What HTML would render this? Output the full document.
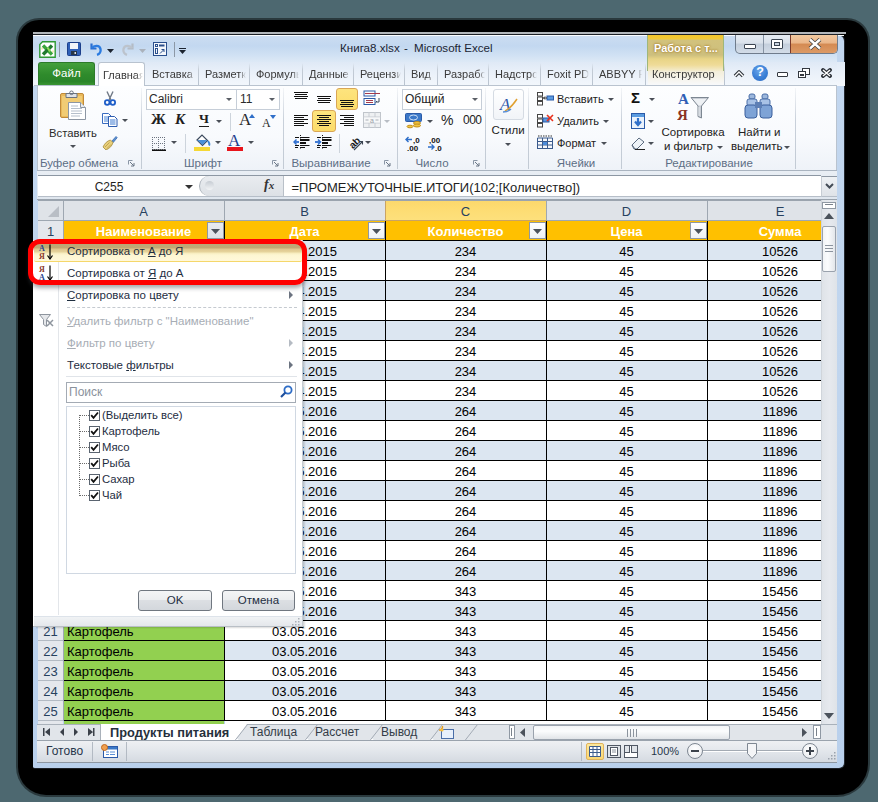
<!DOCTYPE html>
<html><head><meta charset="utf-8">
<style>
*{margin:0;padding:0;box-sizing:border-box}
html,body{width:878px;height:802px;overflow:hidden;background:#4d6870;font-family:"Liberation Sans",sans-serif;font-size:12px;color:#1e1e1e}
.a{position:absolute}
#shadow{left:18px;top:20px;width:850px;height:775px;background:#000;border-radius:21px 21px 31px 28px;box-shadow:0 0 0 2px rgba(0,0,0,.45)}
#win{left:33px;top:34px;width:812px;height:735px;background:linear-gradient(#c3d7ef,#c0d5ee 50%,#b9d0ec);border-top:1px solid #1c2026;border-right:1px solid #252a31;border-bottom:1px solid #1c2026;border-radius:0 7px 6px 2px}
.t{white-space:nowrap}
</style></head><body>
<div class="a" id="shadow"></div>
<div class="a" id="win"></div>

<!-- TITLE BAR -->
<div class="a" style="left:33px;top:32px;width:813px;height:2px;background:#b3b7bb"></div>
<div class="a" style="left:33px;top:35px;width:811px;height:1px;background:#fbfdff"></div>
<div class="a" style="left:33px;top:36px;width:804px;height:26px;background:linear-gradient(#cbdcf1,#c3d8f0 10px,#d2e2f4 20px,#dde9f6 26px)"></div>
<div class="a" style="left:34px;top:62px;width:811px;height:24px;background:linear-gradient(#e2ebf7,#f4f7fc)"></div>
<!-- excel icon -->
<svg class="a" style="left:39px;top:41px" width="17" height="17" viewBox="0 0 17 17"><path d="M3.5 0.8H16.2V16.2H0.8V3.5z" fill="#fff" stroke="#2f9a35" stroke-width="1.4"/><path d="M4 4.5l9 9" stroke="#3aa53c" stroke-width="3.4"/><path d="M13 4.5l-9 9" stroke="#1f7a2e" stroke-width="3.4"/><path d="M8.5 6.5l2.5 4" stroke="#8fdc5a" stroke-width="2"/><path d="M14 9.5v2M3 6.5v2" stroke="#f0d890" stroke-width="1.2"/></svg>
<div class="a" style="left:59px;top:42px;width:1px;height:15px;background:#8c98a6"></div>
<!-- save -->
<svg class="a" style="left:67px;top:42px" width="14" height="14" viewBox="0 0 14 14"><rect x="0.5" y="0.5" width="13" height="13" rx="1" fill="#2e5fb7" stroke="#1d3f8a"/><rect x="3" y="1" width="8" height="6" fill="#f2f5fa"/><rect x="4" y="9" width="6" height="4" fill="#263548"/><rect x="7.5" y="10" width="1.5" height="2" fill="#d8dde5"/></svg>
<!-- undo -->
<svg class="a" style="left:89px;top:42px" width="14" height="14" viewBox="0 0 14 14"><path d="M2.5 1.5v5h5" fill="none" stroke="#2b6fd2" stroke-width="2.2"/><path d="M3 6.2C5 3 10.5 3 11.5 7c.6 2.5-1 5-3.5 5.8" fill="none" stroke="#2b7be0" stroke-width="2.4"/></svg>
<svg class="a" style="left:107px;top:49px" width="7" height="4"><path d="M0 0h7L3.5 4z" fill="#1c2430"/></svg>
<!-- redo gray -->
<svg class="a" style="left:121px;top:42px" width="14" height="14" viewBox="0 0 14 14"><path d="M11.5 1.5v5h-5" fill="none" stroke="#b4bcc6" stroke-width="2.2"/><path d="M11 6.2C9 3 3.5 3 2.5 7c-.6 2.5 1 5 3.5 5.8" fill="none" stroke="#bcc3cc" stroke-width="2.4"/></svg>
<svg class="a" style="left:139px;top:49px" width="7" height="4"><path d="M0 0h7L3.5 4z" fill="#aab2bc"/></svg>
<!-- form icon -->
<svg class="a" style="left:153px;top:42px" width="14" height="14" viewBox="0 0 14 14"><rect x="0.5" y="0.5" width="13" height="13" fill="#f4f7fb" stroke="#2a4f8c"/><rect x="2.5" y="2.5" width="2" height="2" fill="none" stroke="#2a4f8c"/><rect x="6" y="2.5" width="5.5" height="2" fill="#2a4f8c"/><rect x="2.5" y="6.5" width="2" height="5" fill="none" stroke="#2a4f8c"/><path d="M7 11.5l4-4M8.5 7.5h2.5v2.5" fill="none" stroke="#2a4f8c"/></svg>
<div class="a" style="left:174px;top:42px;width:1px;height:15px;background:#8c98a6"></div>
<div class="a" style="left:179px;top:48px;width:7px;height:1px;background:#1c2430"></div>
<svg class="a" style="left:179px;top:50px" width="7" height="4"><path d="M0 0h7L3.5 4z" fill="#1c2430"/></svg>
<!-- title -->
<div class="a t" style="left:340px;top:40.5px;font-size:11.6px;color:#1b2533">Книга8.xlsx</div><div class="a t" style="left:404px;top:40.5px;font-size:11.6px;color:#1b2533">-</div><div class="a t" style="left:414px;top:40.5px;font-size:11.6px;color:#1b2533">Microsoft Excel</div>
<!-- window buttons -->
<div class="a" style="left:735px;top:35px;width:103px;height:19px;border:1px solid #6f7c8c;border-top:none;border-radius:0 0 5px 5px;background:linear-gradient(#e6ecf3,#d9e1ea 45%,#c4cfdc 50%,#d2dce8);overflow:hidden"></div>
<div class="a" style="left:763px;top:35px;width:1px;height:18px;background:#8693a3"></div>
<div class="a" style="left:790px;top:35px;width:1px;height:18px;background:#7a3a2a"></div>
<div class="a" style="left:791px;top:35px;width:46px;height:18px;border-radius:0 0 4px 0;background:linear-gradient(#f2c9a0,#eab68a 45%,#d48a52 50%,#dc9a66)"></div>
<div class="a" style="left:744px;top:44px;width:12px;height:5px;background:#fff;border:1px solid #3b4552;border-radius:1px"></div>
<div class="a" style="left:771px;top:39px;width:12px;height:10px;background:#fff;border:1px solid #3b4552;border-radius:1px"></div>
<div class="a" style="left:774px;top:42px;width:6px;height:4px;background:#c9d3df;border:1px solid #3b4552"></div>
<svg class="a" style="left:808px;top:38px" width="14" height="12" viewBox="0 0 14 12"><path d="M2 1.5l10 9M12 1.5l-10 9" stroke="#3f3f3f" stroke-width="4"/><path d="M2 1.5l10 9M12 1.5l-10 9" stroke="#fff" stroke-width="2.4"/></svg>
<!-- TAB ROW -->
<div class="a" style="left:33px;top:62px;width:804px;height:24px;background:linear-gradient(#dfe9f6,#e9f0f9 40%,#f3f7fc)"></div>
<!-- context tab header -->
<div class="a" style="left:647px;top:35px;width:77px;height:36px;background:linear-gradient(#f3c52a,#f0c838 4px,#d2c27c 5px,#cdbf7e 20px,#e8d486 24px,#efdb98 30px,#f3ecd0 36px);border-left:1px solid #9fb77a;border-right:1px solid #9fb77a"></div>
<div class="a" style="left:648px;top:71px;width:76px;height:14px;background:linear-gradient(#f3eed9,#f8f9fb)"></div>
<div class="a t" style="left:654px;top:42px;font-size:11px;font-weight:bold;color:#fff;text-shadow:0 0 2px #9a7424,0 0 3px #b58f3c">Работа с т...</div>
<div class="a" style="left:38px;top:62px;width:57px;height:24px;border-radius:3px 3px 0 0;background:linear-gradient(#44a03c,#2f8b2c 50%,#2a8529 80%,#3f9a35);border:1px solid #2c7a2a;border-bottom:none"></div>
<div class="a t" style="left:38px;top:67px;width:57px;text-align:center;color:#fff;font-size:11.5px">Файл</div>
<div class="a" style="left:34px;top:85px;width:803px;height:1px;background:#b9c3cf"></div>
<div class="a" style="left:98px;top:62px;width:47px;height:24px;border:1px solid #b9c3cf;border-bottom:none;border-radius:3px 3px 0 0;background:#fff;overflow:hidden"><div class="a t" style="left:4px;top:5.5px;font-size:11px;color:#3a3a3a;width:40px;overflow:hidden;-webkit-mask-image:linear-gradient(90deg,#000 33px,transparent)">Главная</div></div>
<div class="a" style="left:146px;top:62px;width:49px;height:23px;overflow:hidden;-webkit-mask-image:linear-gradient(90deg,#000 calc(100% - 7px),transparent)"><div class="a t" style="left:6px;top:5.5px;font-size:11px;color:#3a3a3a">Вставка</div></div>
<div class="a" style="left:198px;top:63px;width:1px;height:22px;background:linear-gradient(rgba(185,195,207,0),#c4ccd6 30%,#b9c3cf)"></div>
<div class="a" style="left:199px;top:62px;width:47px;height:23px;overflow:hidden;-webkit-mask-image:linear-gradient(90deg,#000 calc(100% - 7px),transparent)"><div class="a t" style="left:6px;top:5.5px;font-size:11px;color:#3a3a3a">Разметка</div></div>
<div class="a" style="left:249px;top:63px;width:1px;height:22px;background:linear-gradient(rgba(185,195,207,0),#c4ccd6 30%,#b9c3cf)"></div>
<div class="a" style="left:250px;top:62px;width:49px;height:23px;overflow:hidden;-webkit-mask-image:linear-gradient(90deg,#000 calc(100% - 7px),transparent)"><div class="a t" style="left:6px;top:5.5px;font-size:11px;color:#3a3a3a">Формулы</div></div>
<div class="a" style="left:302px;top:63px;width:1px;height:22px;background:linear-gradient(rgba(185,195,207,0),#c4ccd6 30%,#b9c3cf)"></div>
<div class="a" style="left:303px;top:62px;width:47px;height:23px;overflow:hidden;-webkit-mask-image:linear-gradient(90deg,#000 calc(100% - 7px),transparent)"><div class="a t" style="left:6px;top:5.5px;font-size:11px;color:#3a3a3a">Данные</div></div>
<div class="a" style="left:353px;top:63px;width:1px;height:22px;background:linear-gradient(rgba(185,195,207,0),#c4ccd6 30%,#b9c3cf)"></div>
<div class="a" style="left:354px;top:62px;width:47px;height:23px;overflow:hidden;-webkit-mask-image:linear-gradient(90deg,#000 calc(100% - 7px),transparent)"><div class="a t" style="left:6px;top:5.5px;font-size:11px;color:#3a3a3a">Рецензирование</div></div>
<div class="a" style="left:404px;top:63px;width:1px;height:22px;background:linear-gradient(rgba(185,195,207,0),#c4ccd6 30%,#b9c3cf)"></div>
<div class="a" style="left:405px;top:62px;width:29px;height:23px;overflow:hidden;-webkit-mask-image:linear-gradient(90deg,#000 calc(100% - 7px),transparent)"><div class="a t" style="left:6px;top:5.5px;font-size:11px;color:#3a3a3a">Вид</div></div>
<div class="a" style="left:437px;top:63px;width:1px;height:22px;background:linear-gradient(rgba(185,195,207,0),#c4ccd6 30%,#b9c3cf)"></div>
<div class="a" style="left:438px;top:62px;width:47px;height:23px;overflow:hidden;-webkit-mask-image:linear-gradient(90deg,#000 calc(100% - 7px),transparent)"><div class="a t" style="left:6px;top:5.5px;font-size:11px;color:#3a3a3a">Разработчик</div></div>
<div class="a" style="left:488px;top:63px;width:1px;height:22px;background:linear-gradient(rgba(185,195,207,0),#c4ccd6 30%,#b9c3cf)"></div>
<div class="a" style="left:489px;top:62px;width:48px;height:23px;overflow:hidden;-webkit-mask-image:linear-gradient(90deg,#000 calc(100% - 7px),transparent)"><div class="a t" style="left:6px;top:5.5px;font-size:11px;color:#3a3a3a">Надстройки</div></div>
<div class="a" style="left:540px;top:63px;width:1px;height:22px;background:linear-gradient(rgba(185,195,207,0),#c4ccd6 30%,#b9c3cf)"></div>
<div class="a" style="left:541px;top:62px;width:48px;height:23px;overflow:hidden;-webkit-mask-image:linear-gradient(90deg,#000 calc(100% - 7px),transparent)"><div class="a t" style="left:6px;top:5.5px;font-size:11px;color:#3a3a3a">Foxit PDF</div></div>
<div class="a" style="left:592px;top:63px;width:1px;height:22px;background:linear-gradient(rgba(185,195,207,0),#c4ccd6 30%,#b9c3cf)"></div>
<div class="a" style="left:593px;top:62px;width:49px;height:23px;overflow:hidden;-webkit-mask-image:linear-gradient(90deg,#000 calc(100% - 7px),transparent)"><div class="a t" style="left:6px;top:5.5px;font-size:11px;color:#3a3a3a">ABBYY PDF</div></div>
<div class="a" style="left:645px;top:63px;width:1px;height:22px;background:linear-gradient(rgba(185,195,207,0),#c4ccd6 30%,#b9c3cf)"></div>
<div class="a" style="left:646px;top:62px;width:75px;height:23px;overflow:hidden;-webkit-mask-image:linear-gradient(90deg,#000 calc(100% - 7px),transparent)"><div class="a t" style="left:6px;top:5.5px;font-size:11px;color:#3a3a3a">Конструктор</div></div>
<div class="a" style="left:724px;top:63px;width:1px;height:22px;background:linear-gradient(rgba(185,195,207,0),#c4ccd6 30%,#b9c3cf)"></div>
<!-- right tab-row icons -->
<svg class="a" style="left:733px;top:69px" width="12" height="9" viewBox="0 0 12 9"><path d="M2 7l4-4 4 4" fill="none" stroke="#2e333a" stroke-width="3.6" stroke-linejoin="round"/><path d="M2 7l4-4 4 4" fill="none" stroke="#fff" stroke-width="1.4"/></svg>
<div class="a" style="left:752px;top:65px;width:16px;height:16px;border-radius:50%;background:radial-gradient(circle at 45% 35%,#6aa6ea,#3a7fd6 55%,#2f6cc0)"></div>
<div class="a t" style="left:752px;top:65px;width:16px;text-align:center;color:#fff;font-weight:bold;font-size:12.5px">?</div>
<div class="a" style="left:777px;top:72px;width:11px;height:5px;border:1.5px solid #33383f;background:#fff;border-radius:1px"></div>
<div class="a" style="left:802px;top:68px;width:8px;height:7px;border:1.5px solid #33383f;background:#fff"></div>
<div class="a" style="left:798px;top:71px;width:8px;height:7px;border:1.5px solid #33383f;background:#fff"></div>
<div class="a" style="left:800px;top:74px;width:4px;height:2px;background:#33383f"></div>
<svg class="a" style="left:821px;top:68px" width="11" height="10" viewBox="0 0 11 10"><path d="M2 2l7 6M9 2l-7 6" stroke="#2e333a" stroke-width="3.8" stroke-linecap="round"/><path d="M2 2l7 6M9 2l-7 6" stroke="#fff" stroke-width="1.5"/></svg>
<!-- RIBBON BODY -->
<div class="a" style="left:37px;top:86px;width:800px;height:85px;background:linear-gradient(#fdfeff,#f8fafd 60%,#eef2f8);border-left:1px solid #b9c3cf;border-right:1px solid #b9c3cf"></div>
<div class="a" style="left:37px;top:170px;width:800px;height:1px;background:#aab4c0"></div>
<div class="a" style="left:141px;top:88px;width:1px;height:81px;background:linear-gradient(#f3f5f8,#c8d0da 40%,#c2cad4)"></div>
<div class="a" style="left:283px;top:88px;width:1px;height:81px;background:linear-gradient(#f3f5f8,#c8d0da 40%,#c2cad4)"></div>
<div class="a" style="left:397px;top:88px;width:1px;height:81px;background:linear-gradient(#f3f5f8,#c8d0da 40%,#c2cad4)"></div>
<div class="a" style="left:485px;top:88px;width:1px;height:81px;background:linear-gradient(#f3f5f8,#c8d0da 40%,#c2cad4)"></div>
<div class="a" style="left:528px;top:88px;width:1px;height:81px;background:linear-gradient(#f3f5f8,#c8d0da 40%,#c2cad4)"></div>
<div class="a" style="left:621px;top:88px;width:1px;height:81px;background:linear-gradient(#f3f5f8,#c8d0da 40%,#c2cad4)"></div>
<div class="a" style="left:795px;top:88px;width:1px;height:81px;background:linear-gradient(#f3f5f8,#c8d0da 40%,#c2cad4)"></div>
<svg class="a" style="left:128px;top:160px" width="7" height="7" viewBox="0 0 7 7"><path d="M0.5 0.5h4M0.5 0.5v4" stroke="#8a96a6"/><path d="M2 2l4 4M6 3v3H3" stroke="#6a7686" fill="none"/></svg>
<svg class="a" style="left:272px;top:160px" width="7" height="7" viewBox="0 0 7 7"><path d="M0.5 0.5h4M0.5 0.5v4" stroke="#8a96a6"/><path d="M2 2l4 4M6 3v3H3" stroke="#6a7686" fill="none"/></svg>
<svg class="a" style="left:384px;top:160px" width="7" height="7" viewBox="0 0 7 7"><path d="M0.5 0.5h4M0.5 0.5v4" stroke="#8a96a6"/><path d="M2 2l4 4M6 3v3H3" stroke="#6a7686" fill="none"/></svg>
<svg class="a" style="left:473px;top:160px" width="7" height="7" viewBox="0 0 7 7"><path d="M0.5 0.5h4M0.5 0.5v4" stroke="#8a96a6"/><path d="M2 2l4 4M6 3v3H3" stroke="#6a7686" fill="none"/></svg>

<svg class="a" style="left:57px;top:90px" width="30" height="32" viewBox="0 0 30 32">
<rect x="3.5" y="3.5" width="23" height="24" rx="1.5" fill="#eab95a" stroke="#c08a3a"/>
<rect x="5" y="6" width="20" height="20" fill="#f1cc74"/>
<path d="M9 3.5h11v4H9z" fill="#dfe3e8" stroke="#6b7480"/>
<circle cx="14.5" cy="2.8" r="1.8" fill="none" stroke="#6b7480"/>
<path d="M11.5 12.5h12l5 5v12h-17z" fill="#fff" stroke="#8c96a3"/>
<path d="M23.5 12.5v5h5" fill="#e8ecf1" stroke="#8c96a3"/>
<path d="M14 16h7M14 18.5h11M14 21h11M14 23.5h11M14 26h9" stroke="#b5bfcb"/>
</svg>
<div class="a t" style="left:45px;top:126.5px;width:56px;text-align:center;font-size:11.3px;color:#2b2b2b">Вставить</div>
<svg class="a" style="left:70px;top:145px" width="6" height="3"><path d="M0 0h6L3 3z" fill="#4a4f57"/></svg>

<svg class="a" style="left:104px;top:91px" width="12" height="15" viewBox="0 0 12 15"><path d="M3 0.5l4 8.5M9 0.5L5 9" stroke="#6f7885" stroke-width="1.4"/><circle cx="3.2" cy="11.5" r="2.3" fill="none" stroke="#1f5ec8" stroke-width="1.8"/><circle cx="8.8" cy="11.5" r="2.3" fill="none" stroke="#1f5ec8" stroke-width="1.8"/></svg>
<svg class="a" style="left:102px;top:113px" width="16" height="14" viewBox="0 0 16 14"><path d="M0.5 0.5h6l2.5 2.5v7.5H0.5z" fill="#fff" stroke="#3a6cc0"/><path d="M2 4h5M2 6h5M2 8h5" stroke="#4a86d8"/><path d="M6.5 3.5h6l2.5 2.5v7.5H6.5z" fill="#fff" stroke="#2d5cb0"/><path d="M8 7h5.5M8 9h5.5M8 11h5.5" stroke="#3a78d0"/></svg>
<svg class="a" style="left:122px;top:119px" width="6" height="3"><path d="M0 0h6L3 3z" fill="#4a4f57"/></svg>

<svg class="a" style="left:102px;top:135px" width="16" height="15" viewBox="0 0 16 15"><path d="M9.5 6.5L14 1.5l1.2 1.2-4.2 5z" fill="#5b8fd0" stroke="#3a6cb0" stroke-width=".8"/><path d="M1 12c2-4 4-6 7.5-7l2.5 2.5c-1 3.5-3 5.5-7 7.5z" fill="#e8cf7a" stroke="#a58a3a" stroke-width=".8"/><path d="M3 12l4.5-4.5M5 13.5l4-4" stroke="#b89a48" stroke-width=".8"/></svg>

<div class="a" style="left:146px;top:89px;width:91px;height:21px;border:1px solid #c6ced8;background:#fff"></div>
<div class="a" style="left:236px;top:89px;width:44px;height:21px;border:1px solid #c6ced8;background:#fff"></div>
<div class="a t" style="left:149px;top:92px;font-size:12px;color:#2b2b2b">Calibri</div>
<div class="a t" style="left:240px;top:92px;font-size:12px;color:#2b2b2b">11</div>
<svg class="a" style="left:226px;top:98px" width="6" height="3"><path d="M0 0h6L3 3z" fill="#5a5f66"/></svg>
<svg class="a" style="left:269px;top:98px" width="6" height="3"><path d="M0 0h6L3 3z" fill="#5a5f66"/></svg>

<div class="a t" style="left:151px;top:111px;font-family:'Liberation Serif',serif;font-weight:bold;font-size:15px;color:#1e1e1e">Ж</div>
<div class="a t" style="left:175px;top:111px;font-family:'Liberation Serif',serif;font-weight:bold;font-style:italic;font-size:15px;color:#1e1e1e">К</div>
<div class="a t" style="left:199px;top:111px;font-family:'Liberation Serif',serif;font-weight:bold;font-size:13.5px;color:#1e1e1e">Ч</div>
<div class="a" style="left:199px;top:126px;width:10px;height:1px;background:#1e1e1e"></div>
<svg class="a" style="left:216px;top:120px" width="6" height="3"><path d="M0 0h6L3 3z" fill="#4a4f57"/></svg>
<div class="a" style="left:230px;top:113px;width:1px;height:18px;background:#cdd4dc"></div>
<div class="a t" style="left:239px;top:110px;font-family:'Liberation Serif',serif;font-size:17px;color:#2a2a2a">A</div>
<svg class="a" style="left:249px;top:114px" width="6" height="4"><path d="M0 4h6L3 0z" fill="#2f6fc9"/></svg>
<div class="a t" style="left:262px;top:116px;font-family:'Liberation Serif',serif;font-size:12px;color:#2a2a2a">A</div>
<svg class="a" style="left:270px;top:115px" width="6" height="4"><path d="M0 0h6L3 4z" fill="#2f6fc9"/></svg>
<svg class="a" style="left:152px;top:137px" width="14" height="14" viewBox="0 0 14 14"><g fill="#6b7380"><rect x="0" y="0" width="1" height="1"/><rect x="0" y="0" width="1" height="1"/><rect x="0" y="6" width="1" height="1"/><rect x="6" y="0" width="1" height="1"/><rect x="0" y="12" width="1" height="1"/><rect x="12" y="0" width="1" height="1"/><rect x="2" y="0" width="1" height="1"/><rect x="0" y="2" width="1" height="1"/><rect x="2" y="6" width="1" height="1"/><rect x="6" y="2" width="1" height="1"/><rect x="2" y="12" width="1" height="1"/><rect x="12" y="2" width="1" height="1"/><rect x="4" y="0" width="1" height="1"/><rect x="0" y="4" width="1" height="1"/><rect x="4" y="6" width="1" height="1"/><rect x="6" y="4" width="1" height="1"/><rect x="4" y="12" width="1" height="1"/><rect x="12" y="4" width="1" height="1"/><rect x="6" y="0" width="1" height="1"/><rect x="0" y="6" width="1" height="1"/><rect x="6" y="6" width="1" height="1"/><rect x="6" y="6" width="1" height="1"/><rect x="6" y="12" width="1" height="1"/><rect x="12" y="6" width="1" height="1"/><rect x="8" y="0" width="1" height="1"/><rect x="0" y="8" width="1" height="1"/><rect x="8" y="6" width="1" height="1"/><rect x="6" y="8" width="1" height="1"/><rect x="8" y="12" width="1" height="1"/><rect x="12" y="8" width="1" height="1"/><rect x="10" y="0" width="1" height="1"/><rect x="0" y="10" width="1" height="1"/><rect x="10" y="6" width="1" height="1"/><rect x="6" y="10" width="1" height="1"/><rect x="10" y="12" width="1" height="1"/><rect x="12" y="10" width="1" height="1"/><rect x="12" y="0" width="1" height="1"/><rect x="0" y="12" width="1" height="1"/><rect x="12" y="6" width="1" height="1"/><rect x="6" y="12" width="1" height="1"/><rect x="12" y="12" width="1" height="1"/><rect x="12" y="12" width="1" height="1"/></g><rect x="0" y="12.5" width="14" height="1.5" fill="#111"/></svg>
<svg class="a" style="left:171px;top:141px" width="6" height="3"><path d="M0 0h6L3 3z" fill="#4a4f57"/></svg>
<div class="a" style="left:185px;top:134px;width:1px;height:19px;background:#cdd4dc"></div>
<svg class="a" style="left:194px;top:134px" width="17" height="13" viewBox="0 0 17 13"><path d="M3 6l5-5 5.5 5.5-5 5z" fill="#fff" stroke="#3c4a5e" stroke-width="1.2"/><path d="M3 6h10.5l-5 5z" fill="#4a90d9"/><path d="M14 7c1 1.5 2 3 1 4.5" stroke="#3c86d8" stroke-width="2" fill="none"/></svg>
<div class="a" style="left:194px;top:147px;width:16px;height:4px;background:#f5d835"></div>
<svg class="a" style="left:215px;top:141px" width="6" height="3"><path d="M0 0h6L3 3z" fill="#4a4f57"/></svg>
<div class="a t" style="left:228px;top:131px;font-family:'Liberation Serif',serif;font-size:17px;color:#223d8c">A</div>
<div class="a" style="left:227px;top:147px;width:16px;height:4px;background:#e8141b"></div>
<svg class="a" style="left:248px;top:141px" width="6" height="3"><path d="M0 0h6L3 3z" fill="#4a4f57"/></svg>

<div class="a" style="left:336px;top:88px;width:22px;height:22px;border:1px solid #d9a655;border-radius:3px;background:linear-gradient(#fde47e,#fcdc6a)"></div>
<div class="a" style="left:312px;top:110px;width:24px;height:22px;border:1px solid #d9a655;border-radius:3px;background:linear-gradient(#fde47e,#fcdc6a)"></div>
<div class="a" style="left:294px;top:92px;width:14px;height:1px;background:#111"></div>
<div class="a" style="left:295px;top:94px;width:12px;height:1px;background:#111"></div>
<div class="a" style="left:294px;top:96px;width:14px;height:1px;background:#111"></div>
<div class="a" style="left:295px;top:98px;width:12px;height:1px;background:#111"></div>
<div class="a" style="left:317px;top:96px;width:14px;height:1px;background:#111"></div>
<div class="a" style="left:318px;top:98px;width:12px;height:1px;background:#111"></div>
<div class="a" style="left:317px;top:100px;width:14px;height:1px;background:#111"></div>
<div class="a" style="left:318px;top:102px;width:12px;height:1px;background:#111"></div>
<div class="a" style="left:340px;top:100px;width:14px;height:1px;background:#111"></div>
<div class="a" style="left:341px;top:102px;width:12px;height:1px;background:#111"></div>
<div class="a" style="left:340px;top:104px;width:14px;height:1px;background:#111"></div>
<div class="a" style="left:341px;top:106px;width:12px;height:1px;background:#111"></div>
<div class="a" style="left:294px;top:115px;width:14px;height:1px;background:#111"></div>
<div class="a" style="left:294px;top:117px;width:10px;height:1px;background:#111"></div>
<div class="a" style="left:294px;top:119px;width:14px;height:1px;background:#111"></div>
<div class="a" style="left:294px;top:121px;width:10px;height:1px;background:#111"></div>
<div class="a" style="left:294px;top:123px;width:14px;height:1px;background:#111"></div>
<div class="a" style="left:294px;top:125px;width:10px;height:1px;background:#111"></div>
<div class="a" style="left:317px;top:115px;width:14px;height:1px;background:#111"></div>
<div class="a" style="left:319px;top:117px;width:10px;height:1px;background:#111"></div>
<div class="a" style="left:317px;top:119px;width:14px;height:1px;background:#111"></div>
<div class="a" style="left:319px;top:121px;width:10px;height:1px;background:#111"></div>
<div class="a" style="left:317px;top:123px;width:14px;height:1px;background:#111"></div>
<div class="a" style="left:319px;top:125px;width:10px;height:1px;background:#111"></div>
<div class="a" style="left:340px;top:115px;width:14px;height:1px;background:#111"></div>
<div class="a" style="left:344px;top:117px;width:10px;height:1px;background:#111"></div>
<div class="a" style="left:340px;top:119px;width:14px;height:1px;background:#111"></div>
<div class="a" style="left:344px;top:121px;width:10px;height:1px;background:#111"></div>
<div class="a" style="left:340px;top:123px;width:14px;height:1px;background:#111"></div>
<div class="a" style="left:344px;top:125px;width:10px;height:1px;background:#111"></div>
<svg class="a" style="left:363px;top:90px" width="18" height="17" viewBox="0 0 18 17"><rect x="1" y="1" width="11" height="5" fill="#fff" stroke="#2a5aa8"/><path d="M2 3.5h15" stroke="#a33b4c"/><rect x="1" y="8.5" width="11" height="6" fill="#fff" stroke="#2a5aa8"/><path d="M3 10.5h7M3 12.5h7" stroke="#a33b4c"/><path d="M16 8v4h-3M14 11l-1.5 1.5" stroke="#3f4d60" fill="none"/></svg>
<svg class="a" style="left:363px;top:112px" width="18" height="16" viewBox="0 0 18 16"><rect x="0.5" y="0.5" width="17" height="15" fill="#eef0f2" stroke="#c0c5cb"/><path d="M0.5 5h17M0.5 11h17M6 0v5M12 0v5M6 11v5M12 11v5" stroke="#c8ccd2"/><rect x="1" y="5.5" width="16" height="5" fill="#f7f8f9"/><path d="M2.5 8h3M12.5 8h3" stroke="#a9aeb5"/><text x="9" y="10.5" font-size="7" text-anchor="middle" fill="#9aa0a8" font-family="Liberation Sans">a</text></svg>
<svg class="a" style="left:384px;top:120px" width="6" height="3"><path d="M0 0h6L3 3z" fill="#b8bdc4"/></svg>
<svg class="a" style="left:293px;top:135px" width="17" height="16" viewBox="0 0 17 16"><path d="M7.5 0v15" stroke="#111" stroke-dasharray="1 1.5"/><path d="M2 2.5h4M2 10.5h4M2 12.5h3" stroke="#111"/><path d="M7 2.5h9.5M7 10.5h9.5M7 12.5h5" stroke="#111"/><path d="M7 5h9.5" stroke="#111" stroke-width="2"/><path d="M7 8h6" stroke="#111" stroke-width="2"/><path d="M1 7h5" stroke="#2f6fd0" stroke-width="1.8"/><path d="M3.5 4.5L1 7l2.5 2.5" stroke="#2f6fd0" stroke-width="1.5" fill="none"/></svg>
<svg class="a" style="left:315px;top:135px" width="17" height="16" viewBox="0 0 17 16"><path d="M7.5 0v15" stroke="#111" stroke-dasharray="1 1.5"/><path d="M2 2.5h4M2 10.5h4M2 12.5h3" stroke="#111"/><path d="M7 2.5h9.5M7 10.5h9.5M7 12.5h5" stroke="#111"/><path d="M7 5h9.5" stroke="#111" stroke-width="2"/><path d="M7 8h6" stroke="#111" stroke-width="2"/><path d="M0 7h5" stroke="#2f6fd0" stroke-width="1.8"/><path d="M3 4.5L5.5 7 3 9.5" stroke="#2f6fd0" stroke-width="1.5" fill="none"/></svg>
<div class="a" style="left:339px;top:134px;width:1px;height:19px;background:#cdd4dc"></div>
<svg class="a" style="left:348px;top:135px" width="16" height="16" viewBox="0 0 16 16"><g transform="rotate(-45 7 8)"><text x="1" y="11" font-size="10" font-weight="bold" fill="#1a1a1a" font-family="Liberation Sans">ab</text></g><path d="M6 15L14.5 6.5M11.5 6.5h3v3" stroke="#3a4350" fill="none" stroke-width="1.1"/></svg>
<svg class="a" style="left:365px;top:141px" width="6" height="3"><path d="M0 0h6L3 3z" fill="#4a4f57"/></svg>
<div class="a" style="left:402px;top:89px;width:80px;height:21px;border:1px solid #c6ced8;background:#fff"></div>
<div class="a t" style="left:405px;top:92px;font-size:12px;color:#222">Общий</div>
<svg class="a" style="left:472px;top:98px" width="6" height="3"><path d="M0 0h6L3 3z" fill="#5a5f66"/></svg>
<svg class="a" style="left:405px;top:113px" width="18" height="16" viewBox="0 0 18 16"><rect x="0.5" y="0.5" width="16" height="8" rx="1" fill="#3b78c8" stroke="#2a5aa8"/><ellipse cx="8.5" cy="4.5" rx="4" ry="2.5" fill="none" stroke="#cfe0f6"/><ellipse cx="12" cy="10" rx="3.5" ry="1.5" fill="#f3c640" stroke="#c08f20"/><ellipse cx="12" cy="12.5" rx="3.5" ry="1.5" fill="#f3c640" stroke="#c08f20"/><ellipse cx="5" cy="13.5" rx="3" ry="1.3" fill="#f3c640" stroke="#c08f20"/></svg>
<svg class="a" style="left:427px;top:120px" width="6" height="3"><path d="M0 0h6L3 3z" fill="#4a4f57"/></svg>
<div class="a t" style="left:441px;top:112px;font-size:14px;color:#222">%</div>
<div class="a t" style="left:463px;top:113px;font-size:12px;color:#222;letter-spacing:-0.5px">000</div>
<svg class="a" style="left:405px;top:135px" width="18" height="16" viewBox="0 0 18 16"><path d="M1 4.5h6M3.5 2L1 4.5 3.5 7" stroke="#2f6fc9" fill="none" stroke-width="1.4"/><text x="8" y="8" font-size="8" font-weight="bold" fill="#111" font-family="Liberation Sans">,0</text><text x="2" y="15.5" font-size="8" font-weight="bold" fill="#111" font-family="Liberation Sans">,00</text></svg>
<svg class="a" style="left:427px;top:135px" width="18" height="16" viewBox="0 0 18 16"><text x="2" y="8" font-size="8" font-weight="bold" fill="#111" font-family="Liberation Sans">,00</text><path d="M1 12h6M4.5 9.5L7 12 4.5 14.5" stroke="#2f6fc9" fill="none" stroke-width="1.4"/><text x="8" y="15.5" font-size="8" font-weight="bold" fill="#111" font-family="Liberation Sans">,0</text></svg>
<div class="a" style="left:493px;top:89px;width:31px;height:31px;border:1px solid #d5dbe3;border-radius:3px;background:linear-gradient(#fff,#f1f4f8)"></div>
<svg class="a" style="left:499px;top:94px" width="20" height="20" viewBox="0 0 20 20"><text x="1" y="16" font-size="17" font-style="italic" fill="#2c55a8" font-family="Liberation Serif">A</text><path d="M6 17c4-2 8-6 12-12" stroke="#e0a030" stroke-width="1.5" fill="none"/><path d="M4 18c3 0 6-1 8-3" stroke="#5a8fd6" stroke-width="1.5" fill="none"/></svg>
<div class="a t" style="left:491px;top:124px;width:34px;text-align:center;font-size:11.5px;color:#222">Стили</div>
<svg class="a" style="left:505px;top:143px" width="6" height="3"><path d="M0 0h6L3 3z" fill="#4a4f57"/></svg>
<svg class="a" style="left:537px;top:92px" width="17" height="14" viewBox="0 0 17 14"><rect x="0.5" y="0.5" width="5" height="3.5" fill="#fff" stroke="#444"/><rect x="0.5" y="5" width="5" height="3.5" fill="#fff" stroke="#444"/><rect x="0.5" y="9.5" width="5" height="3.5" fill="#fff" stroke="#444"/><rect x="10" y="4" width="6.5" height="4" fill="#5a9be0" stroke="#2a5aa8"/><path d="M6.5 6h3.5M8 4.5L6.5 6 8 7.5" stroke="#222" fill="none"/></svg>
<div class="a t" style="left:557px;top:92.5px;font-size:11px;color:#222">Вставить</div>
<svg class="a" style="left:537px;top:114px" width="17" height="14" viewBox="0 0 17 14"><rect x="0.5" y="0.5" width="5" height="3.5" fill="#fff" stroke="#444"/><rect x="0.5" y="5" width="5" height="3.5" fill="#fff" stroke="#444"/><rect x="0.5" y="9.5" width="5" height="3.5" fill="#fff" stroke="#444"/><rect x="6" y="4" width="6" height="4" fill="#5a9be0" stroke="#2a5aa8"/><path d="M10 1l6 6M16 1l-6 6" stroke="#e8301c" stroke-width="1.6"/></svg>
<div class="a t" style="left:557px;top:114.5px;font-size:11px;color:#222">Удалить</div>
<svg class="a" style="left:537px;top:135px" width="17" height="15" viewBox="0 0 17 15"><path d="M0.5 3h15M0.5 6.5h15M0.5 10h15M0.5 13.5h15M0.5 3v11M5.5 3v11M10.5 3v11M15.5 3v11" stroke="#3a5a8c" fill="none"/><rect x="6" y="7" width="4" height="3" fill="#4a8ad8"/><path d="M1 1h14" stroke="#333" stroke-dasharray="1.5 1"/></svg>
<div class="a t" style="left:557px;top:136.5px;font-size:11px;color:#222">Формат</div>
<svg class="a" style="left:608px;top:98px" width="6" height="3"><path d="M0 0h6L3 3z" fill="#4a4f57"/></svg>
<svg class="a" style="left:603px;top:120px" width="6" height="3"><path d="M0 0h6L3 3z" fill="#4a4f57"/></svg>
<svg class="a" style="left:601px;top:142px" width="6" height="3"><path d="M0 0h6L3 3z" fill="#4a4f57"/></svg>
<div class="a t" style="left:631px;top:89px;font-size:15px;font-weight:bold;color:#111">Σ</div>
<svg class="a" style="left:631px;top:113px" width="14" height="16" viewBox="0 0 14 16"><rect x="0.5" y="0.5" width="13" height="15" fill="#eaf2fc" stroke="#2a5aa8"/><rect x="1" y="1" width="12" height="3" fill="#5a9be0"/><path d="M7 5v6M4 8.5L7 12l3-3.5" stroke="#2f6fc9" stroke-width="2.2" fill="none"/></svg>
<svg class="a" style="left:630px;top:137px" width="16" height="13" viewBox="0 0 16 13"><path d="M2 8l7-7 5 4-7 7H4z" fill="#eef3f8" stroke="#5b6b80"/><path d="M2 8l3 4" stroke="#5b6b80"/><path d="M5 12.5h10" stroke="#222"/></svg>
<svg class="a" style="left:649px;top:98px" width="6" height="3"><path d="M0 0h6L3 3z" fill="#4a4f57"/></svg>
<svg class="a" style="left:648px;top:120px" width="6" height="3"><path d="M0 0h6L3 3z" fill="#4a4f57"/></svg>
<svg class="a" style="left:648px;top:142px" width="6" height="3"><path d="M0 0h6L3 3z" fill="#4a4f57"/></svg>
<svg class="a" style="left:677px;top:91px" width="33" height="30" viewBox="0 0 33 30"><text x="1" y="13" font-size="15" font-weight="bold" fill="#2f5fb5" font-family="Liberation Serif">A</text><text x="0" y="29" font-size="15" font-weight="bold" fill="#8b3322" font-family="Liberation Serif">Я</text><path d="M14 6.5h17.5l-7 8.5v12l-3.5-1.5V15z" fill="#c9ced6" stroke="#7d8792"/><path d="M16 8h13.5l-5.5 6.5h-2.5z" fill="#eef1f4"/><path d="M22 16v9" stroke="#e6e9ed"/></svg>
<div class="a t" style="left:657px;top:126px;width:72px;text-align:center;font-size:11.5px;color:#222">Сортировка</div>
<div class="a t" style="left:664px;top:140px;font-size:11.5px;color:#222">и фильтр</div>
<svg class="a" style="left:744px;top:93px" width="29" height="26" viewBox="0 0 29 26"><rect x="5" y="1" width="6" height="5" rx="2" fill="#9cb7dc" stroke="#4a6ea8"/><rect x="18" y="1" width="6" height="5" rx="2" fill="#9cb7dc" stroke="#4a6ea8"/><rect x="3" y="6" width="10" height="7" rx="2" fill="#a8c2e6" stroke="#4a6ea8"/><rect x="16" y="6" width="10" height="7" rx="2" fill="#a8c2e6" stroke="#4a6ea8"/><rect x="1" y="12" width="12" height="13" rx="3" fill="#7ea3d6" stroke="#3a5f9c"/><rect x="16" y="12" width="12" height="13" rx="3" fill="#7ea3d6" stroke="#3a5f9c"/><rect x="11" y="9" width="7" height="6" fill="#5d7fb5"/></svg>
<div class="a t" style="left:738px;top:126px;font-size:11.5px;color:#222">Найти и</div>
<div class="a t" style="left:731px;top:140px;font-size:11.5px;color:#222">выделить</div>
<svg class="a" style="left:717px;top:146px" width="6" height="3"><path d="M0 0h6L3 3z" fill="#4a4f57"/></svg>
<svg class="a" style="left:784px;top:146px" width="6" height="3"><path d="M0 0h6L3 3z" fill="#4a4f57"/></svg>

<div class="a t" style="left:19px;top:157px;width:120px;text-align:center;font-size:11.5px;color:#5d6e85">Буфер обмена</div>
<div class="a t" style="left:143px;top:157px;width:120px;text-align:center;font-size:11.5px;color:#5d6e85">Шрифт</div>
<div class="a t" style="left:271px;top:157px;width:120px;text-align:center;font-size:11.5px;color:#5d6e85">Выравнивание</div>
<div class="a t" style="left:372px;top:157px;width:120px;text-align:center;font-size:11.5px;color:#5d6e85">Число</div>
<div class="a t" style="left:516px;top:157px;width:120px;text-align:center;font-size:11.5px;color:#5d6e85">Ячейки</div>
<div class="a t" style="left:649px;top:157px;width:120px;text-align:center;font-size:11.5px;color:#5d6e85">Редактирование</div>

<!-- FORMULA BAR -->
<div class="a" style="left:37px;top:171px;width:800px;height:29px;background:linear-gradient(#e9eef4,#dfe6ee)"></div>
<div class="a" style="left:38px;top:175px;width:783px;height:22px;border-top:1px solid #8d97a3;border-bottom:1px solid #b6bec8;background:#fff"></div>
<div class="a t" style="left:38px;top:180px;width:142px;text-align:center;font-size:12px;color:#1e1e1e">C255</div>
<svg class="a" style="left:185px;top:185px" width="8" height="4"><path d="M0 0h8L4 4z" fill="#333"/></svg>
<div class="a" style="left:199px;top:176px;width:85px;height:20px;border-radius:10px 0 0 10px;background:linear-gradient(#e9ecf0,#dde1e6);border-left:1px solid #a9b0b8"></div>
<div class="a" style="left:205px;top:181px;width:9px;height:9px;border-radius:50%;background:linear-gradient(#c6ccd3,#f2f4f6)"></div>
<div class="a t" style="left:264px;top:177px;font-family:'Liberation Serif',serif;font-style:italic;font-weight:bold;font-size:14px;color:#333">f<span style="font-size:11px">x</span></div>
<div class="a" style="left:283px;top:176px;width:1px;height:20px;background:#b9c0c8"></div>
<div class="a t" style="left:291.5px;top:179.5px;font-size:13px;color:#1e1e1e">=ПРОМЕЖУТОЧНЫЕ.ИТОГИ(102;[Количество])</div>
<div class="a" style="left:821px;top:176px;width:16px;height:21px;background:linear-gradient(#eef1f4,#dfe3e8);border-left:1px solid #c7cdd4;border-top:1px solid #8d97a3;border-bottom:1px solid #b6bec8"></div>
<svg class="a" style="left:825px;top:183px" width="9" height="6" viewBox="0 0 9 6"><path d="M1 1l3.5 3.5L8 1" stroke="#444c56" stroke-width="2" fill="none"/></svg>
<div class="a" style="left:37px;top:199px;width:800px;height:1px;background:#9aa3ad"></div>

<div class="a" style="left:38px;top:200px;width:783px;height:521px;background:#fff"></div>
<!-- column header row -->
<div class="a" style="left:38px;top:200px;width:783px;height:21px;background:#dfe3e8;border-top:1px solid #9ba4ae;border-bottom:1px solid #9ea7b1"></div>
<svg class="a" style="left:48px;top:205px" width="12" height="12"><path d="M11 1v11H0z" fill="#b9bec5"/></svg>
<div class="a" style="left:224px;top:201px;width:1px;height:19px;background:#9ea7b1"></div>
<div class="a t" style="left:63px;top:204px;width:161px;text-align:center;font-size:13px;color:#27415f">A</div>
<div class="a" style="left:385px;top:201px;width:1px;height:19px;background:#9ea7b1"></div>
<div class="a t" style="left:224px;top:204px;width:161px;text-align:center;font-size:13px;color:#27415f">B</div>
<div class="a" style="left:385px;top:201px;width:162px;height:20px;background:linear-gradient(#fbd86c,#fddc72 40%,#fde07c);border:1px solid #c9a364;border-top:none"></div>
<div class="a" style="left:546px;top:201px;width:1px;height:19px;background:#9ea7b1"></div>
<div class="a t" style="left:385px;top:204px;width:161px;text-align:center;font-size:13px;color:#27415f">C</div>
<div class="a" style="left:707px;top:201px;width:1px;height:19px;background:#9ea7b1"></div>
<div class="a t" style="left:546px;top:204px;width:161px;text-align:center;font-size:13px;color:#27415f">D</div>
<div class="a" style="left:821px;top:201px;width:1px;height:19px;background:#9ea7b1"></div>
<div class="a t" style="left:707px;top:204px;width:146px;text-align:center;font-size:13px;color:#27415f">E</div>
<div class="a" style="left:63px;top:201px;width:1px;height:520px;background:#9ea7b1"></div>
<div class="a" style="left:38px;top:221px;width:25px;height:20px;background:#e4e7ec;border-bottom:1px solid #b3bac3"></div>
<div class="a t" style="left:38px;top:224px;width:25px;text-align:center;font-size:13px;color:#27415f">1</div>
<div class="a" style="left:64px;top:221px;width:757px;height:19px;background:#ffc000"></div>
<div class="a t" style="left:63px;top:224px;width:161px;text-align:center;font-size:13px;font-weight:bold;color:#fff">Наименование</div>
<div class="a t" style="left:224px;top:224px;width:161px;text-align:center;font-size:13px;font-weight:bold;color:#fff">Дата</div>
<div class="a t" style="left:385px;top:224px;width:161px;text-align:center;font-size:13px;font-weight:bold;color:#fff">Количество</div>
<div class="a t" style="left:546px;top:224px;width:161px;text-align:center;font-size:13px;font-weight:bold;color:#fff">Цена</div>
<div class="a t" style="left:707px;top:224px;width:146px;text-align:center;font-size:13px;font-weight:bold;color:#fff">Сумма</div>
<div class="a" style="left:38px;top:241px;width:25px;height:20px;background:#e4e7ec;border-bottom:1px solid #b3bac3"></div>
<div class="a t" style="left:38px;top:244px;width:25px;text-align:center;font-size:13px;color:#27415f">2</div>
<div class="a" style="left:64px;top:240px;width:757px;height:21px;background:#dce6f1;border-top:1px solid #000"></div>
<div class="a" style="left:64px;top:241px;width:160px;height:20px;background:#92d050"></div>
<div class="a t" style="left:67px;top:244px;font-size:13px;color:#000">Картофель</div>
<div class="a t" style="left:224px;top:244px;width:161px;text-align:center;font-size:13px;color:#000">03.04.2015</div>
<div class="a t" style="left:385px;top:244px;width:161px;text-align:center;font-size:13px;color:#000">234</div>
<div class="a t" style="left:546px;top:244px;width:161px;text-align:center;font-size:13px;color:#000">45</div>
<div class="a t" style="left:707px;top:244px;width:146px;text-align:center;font-size:13px;color:#000">10526</div>
<div class="a" style="left:38px;top:261px;width:25px;height:20px;background:#e4e7ec;border-bottom:1px solid #b3bac3"></div>
<div class="a t" style="left:38px;top:264px;width:25px;text-align:center;font-size:13px;color:#27415f">3</div>
<div class="a" style="left:64px;top:260px;width:757px;height:21px;background:#ffffff;border-top:1px solid #000"></div>
<div class="a" style="left:64px;top:261px;width:160px;height:20px;background:#92d050"></div>
<div class="a t" style="left:67px;top:264px;font-size:13px;color:#000">Картофель</div>
<div class="a t" style="left:224px;top:264px;width:161px;text-align:center;font-size:13px;color:#000">03.04.2015</div>
<div class="a t" style="left:385px;top:264px;width:161px;text-align:center;font-size:13px;color:#000">234</div>
<div class="a t" style="left:546px;top:264px;width:161px;text-align:center;font-size:13px;color:#000">45</div>
<div class="a t" style="left:707px;top:264px;width:146px;text-align:center;font-size:13px;color:#000">10526</div>
<div class="a" style="left:38px;top:281px;width:25px;height:20px;background:#e4e7ec;border-bottom:1px solid #b3bac3"></div>
<div class="a t" style="left:38px;top:284px;width:25px;text-align:center;font-size:13px;color:#27415f">4</div>
<div class="a" style="left:64px;top:280px;width:757px;height:21px;background:#dce6f1;border-top:1px solid #000"></div>
<div class="a" style="left:64px;top:281px;width:160px;height:20px;background:#92d050"></div>
<div class="a t" style="left:67px;top:284px;font-size:13px;color:#000">Картофель</div>
<div class="a t" style="left:224px;top:284px;width:161px;text-align:center;font-size:13px;color:#000">03.04.2015</div>
<div class="a t" style="left:385px;top:284px;width:161px;text-align:center;font-size:13px;color:#000">234</div>
<div class="a t" style="left:546px;top:284px;width:161px;text-align:center;font-size:13px;color:#000">45</div>
<div class="a t" style="left:707px;top:284px;width:146px;text-align:center;font-size:13px;color:#000">10526</div>
<div class="a" style="left:38px;top:301px;width:25px;height:20px;background:#e4e7ec;border-bottom:1px solid #b3bac3"></div>
<div class="a t" style="left:38px;top:304px;width:25px;text-align:center;font-size:13px;color:#27415f">5</div>
<div class="a" style="left:64px;top:300px;width:757px;height:21px;background:#ffffff;border-top:1px solid #000"></div>
<div class="a" style="left:64px;top:301px;width:160px;height:20px;background:#92d050"></div>
<div class="a t" style="left:67px;top:304px;font-size:13px;color:#000">Картофель</div>
<div class="a t" style="left:224px;top:304px;width:161px;text-align:center;font-size:13px;color:#000">03.04.2015</div>
<div class="a t" style="left:385px;top:304px;width:161px;text-align:center;font-size:13px;color:#000">234</div>
<div class="a t" style="left:546px;top:304px;width:161px;text-align:center;font-size:13px;color:#000">45</div>
<div class="a t" style="left:707px;top:304px;width:146px;text-align:center;font-size:13px;color:#000">10526</div>
<div class="a" style="left:38px;top:321px;width:25px;height:20px;background:#e4e7ec;border-bottom:1px solid #b3bac3"></div>
<div class="a t" style="left:38px;top:324px;width:25px;text-align:center;font-size:13px;color:#27415f">6</div>
<div class="a" style="left:64px;top:320px;width:757px;height:21px;background:#dce6f1;border-top:1px solid #000"></div>
<div class="a" style="left:64px;top:321px;width:160px;height:20px;background:#92d050"></div>
<div class="a t" style="left:67px;top:324px;font-size:13px;color:#000">Картофель</div>
<div class="a t" style="left:224px;top:324px;width:161px;text-align:center;font-size:13px;color:#000">03.04.2015</div>
<div class="a t" style="left:385px;top:324px;width:161px;text-align:center;font-size:13px;color:#000">234</div>
<div class="a t" style="left:546px;top:324px;width:161px;text-align:center;font-size:13px;color:#000">45</div>
<div class="a t" style="left:707px;top:324px;width:146px;text-align:center;font-size:13px;color:#000">10526</div>
<div class="a" style="left:38px;top:341px;width:25px;height:20px;background:#e4e7ec;border-bottom:1px solid #b3bac3"></div>
<div class="a t" style="left:38px;top:344px;width:25px;text-align:center;font-size:13px;color:#27415f">7</div>
<div class="a" style="left:64px;top:340px;width:757px;height:21px;background:#ffffff;border-top:1px solid #000"></div>
<div class="a" style="left:64px;top:341px;width:160px;height:20px;background:#92d050"></div>
<div class="a t" style="left:67px;top:344px;font-size:13px;color:#000">Картофель</div>
<div class="a t" style="left:224px;top:344px;width:161px;text-align:center;font-size:13px;color:#000">03.04.2015</div>
<div class="a t" style="left:385px;top:344px;width:161px;text-align:center;font-size:13px;color:#000">234</div>
<div class="a t" style="left:546px;top:344px;width:161px;text-align:center;font-size:13px;color:#000">45</div>
<div class="a t" style="left:707px;top:344px;width:146px;text-align:center;font-size:13px;color:#000">10526</div>
<div class="a" style="left:38px;top:361px;width:25px;height:20px;background:#e4e7ec;border-bottom:1px solid #b3bac3"></div>
<div class="a t" style="left:38px;top:364px;width:25px;text-align:center;font-size:13px;color:#27415f">8</div>
<div class="a" style="left:64px;top:360px;width:757px;height:21px;background:#dce6f1;border-top:1px solid #000"></div>
<div class="a" style="left:64px;top:361px;width:160px;height:20px;background:#92d050"></div>
<div class="a t" style="left:67px;top:364px;font-size:13px;color:#000">Картофель</div>
<div class="a t" style="left:224px;top:364px;width:161px;text-align:center;font-size:13px;color:#000">03.04.2015</div>
<div class="a t" style="left:385px;top:364px;width:161px;text-align:center;font-size:13px;color:#000">234</div>
<div class="a t" style="left:546px;top:364px;width:161px;text-align:center;font-size:13px;color:#000">45</div>
<div class="a t" style="left:707px;top:364px;width:146px;text-align:center;font-size:13px;color:#000">10526</div>
<div class="a" style="left:38px;top:381px;width:25px;height:20px;background:#e4e7ec;border-bottom:1px solid #b3bac3"></div>
<div class="a t" style="left:38px;top:384px;width:25px;text-align:center;font-size:13px;color:#27415f">9</div>
<div class="a" style="left:64px;top:380px;width:757px;height:21px;background:#ffffff;border-top:1px solid #000"></div>
<div class="a" style="left:64px;top:381px;width:160px;height:20px;background:#92d050"></div>
<div class="a t" style="left:67px;top:384px;font-size:13px;color:#000">Картофель</div>
<div class="a t" style="left:224px;top:384px;width:161px;text-align:center;font-size:13px;color:#000">03.04.2015</div>
<div class="a t" style="left:385px;top:384px;width:161px;text-align:center;font-size:13px;color:#000">234</div>
<div class="a t" style="left:546px;top:384px;width:161px;text-align:center;font-size:13px;color:#000">45</div>
<div class="a t" style="left:707px;top:384px;width:146px;text-align:center;font-size:13px;color:#000">10526</div>
<div class="a" style="left:38px;top:401px;width:25px;height:20px;background:#e4e7ec;border-bottom:1px solid #b3bac3"></div>
<div class="a t" style="left:38px;top:404px;width:25px;text-align:center;font-size:13px;color:#27415f">10</div>
<div class="a" style="left:64px;top:400px;width:757px;height:21px;background:#dce6f1;border-top:1px solid #000"></div>
<div class="a" style="left:64px;top:401px;width:160px;height:20px;background:#92d050"></div>
<div class="a t" style="left:67px;top:404px;font-size:13px;color:#000">Картофель</div>
<div class="a t" style="left:224px;top:404px;width:161px;text-align:center;font-size:13px;color:#000">03.05.2016</div>
<div class="a t" style="left:385px;top:404px;width:161px;text-align:center;font-size:13px;color:#000">264</div>
<div class="a t" style="left:546px;top:404px;width:161px;text-align:center;font-size:13px;color:#000">45</div>
<div class="a t" style="left:707px;top:404px;width:146px;text-align:center;font-size:13px;color:#000">11896</div>
<div class="a" style="left:38px;top:421px;width:25px;height:20px;background:#e4e7ec;border-bottom:1px solid #b3bac3"></div>
<div class="a t" style="left:38px;top:424px;width:25px;text-align:center;font-size:13px;color:#27415f">11</div>
<div class="a" style="left:64px;top:420px;width:757px;height:21px;background:#ffffff;border-top:1px solid #000"></div>
<div class="a" style="left:64px;top:421px;width:160px;height:20px;background:#92d050"></div>
<div class="a t" style="left:67px;top:424px;font-size:13px;color:#000">Картофель</div>
<div class="a t" style="left:224px;top:424px;width:161px;text-align:center;font-size:13px;color:#000">03.05.2016</div>
<div class="a t" style="left:385px;top:424px;width:161px;text-align:center;font-size:13px;color:#000">264</div>
<div class="a t" style="left:546px;top:424px;width:161px;text-align:center;font-size:13px;color:#000">45</div>
<div class="a t" style="left:707px;top:424px;width:146px;text-align:center;font-size:13px;color:#000">11896</div>
<div class="a" style="left:38px;top:441px;width:25px;height:20px;background:#e4e7ec;border-bottom:1px solid #b3bac3"></div>
<div class="a t" style="left:38px;top:444px;width:25px;text-align:center;font-size:13px;color:#27415f">12</div>
<div class="a" style="left:64px;top:440px;width:757px;height:21px;background:#dce6f1;border-top:1px solid #000"></div>
<div class="a" style="left:64px;top:441px;width:160px;height:20px;background:#92d050"></div>
<div class="a t" style="left:67px;top:444px;font-size:13px;color:#000">Картофель</div>
<div class="a t" style="left:224px;top:444px;width:161px;text-align:center;font-size:13px;color:#000">03.05.2016</div>
<div class="a t" style="left:385px;top:444px;width:161px;text-align:center;font-size:13px;color:#000">264</div>
<div class="a t" style="left:546px;top:444px;width:161px;text-align:center;font-size:13px;color:#000">45</div>
<div class="a t" style="left:707px;top:444px;width:146px;text-align:center;font-size:13px;color:#000">11896</div>
<div class="a" style="left:38px;top:461px;width:25px;height:20px;background:#e4e7ec;border-bottom:1px solid #b3bac3"></div>
<div class="a t" style="left:38px;top:464px;width:25px;text-align:center;font-size:13px;color:#27415f">13</div>
<div class="a" style="left:64px;top:460px;width:757px;height:21px;background:#ffffff;border-top:1px solid #000"></div>
<div class="a" style="left:64px;top:461px;width:160px;height:20px;background:#92d050"></div>
<div class="a t" style="left:67px;top:464px;font-size:13px;color:#000">Картофель</div>
<div class="a t" style="left:224px;top:464px;width:161px;text-align:center;font-size:13px;color:#000">03.05.2016</div>
<div class="a t" style="left:385px;top:464px;width:161px;text-align:center;font-size:13px;color:#000">264</div>
<div class="a t" style="left:546px;top:464px;width:161px;text-align:center;font-size:13px;color:#000">45</div>
<div class="a t" style="left:707px;top:464px;width:146px;text-align:center;font-size:13px;color:#000">11896</div>
<div class="a" style="left:38px;top:481px;width:25px;height:20px;background:#e4e7ec;border-bottom:1px solid #b3bac3"></div>
<div class="a t" style="left:38px;top:484px;width:25px;text-align:center;font-size:13px;color:#27415f">14</div>
<div class="a" style="left:64px;top:480px;width:757px;height:21px;background:#dce6f1;border-top:1px solid #000"></div>
<div class="a" style="left:64px;top:481px;width:160px;height:20px;background:#92d050"></div>
<div class="a t" style="left:67px;top:484px;font-size:13px;color:#000">Картофель</div>
<div class="a t" style="left:224px;top:484px;width:161px;text-align:center;font-size:13px;color:#000">03.05.2016</div>
<div class="a t" style="left:385px;top:484px;width:161px;text-align:center;font-size:13px;color:#000">264</div>
<div class="a t" style="left:546px;top:484px;width:161px;text-align:center;font-size:13px;color:#000">45</div>
<div class="a t" style="left:707px;top:484px;width:146px;text-align:center;font-size:13px;color:#000">11896</div>
<div class="a" style="left:38px;top:501px;width:25px;height:20px;background:#e4e7ec;border-bottom:1px solid #b3bac3"></div>
<div class="a t" style="left:38px;top:504px;width:25px;text-align:center;font-size:13px;color:#27415f">15</div>
<div class="a" style="left:64px;top:500px;width:757px;height:21px;background:#ffffff;border-top:1px solid #000"></div>
<div class="a" style="left:64px;top:501px;width:160px;height:20px;background:#92d050"></div>
<div class="a t" style="left:67px;top:504px;font-size:13px;color:#000">Картофель</div>
<div class="a t" style="left:224px;top:504px;width:161px;text-align:center;font-size:13px;color:#000">03.05.2016</div>
<div class="a t" style="left:385px;top:504px;width:161px;text-align:center;font-size:13px;color:#000">264</div>
<div class="a t" style="left:546px;top:504px;width:161px;text-align:center;font-size:13px;color:#000">45</div>
<div class="a t" style="left:707px;top:504px;width:146px;text-align:center;font-size:13px;color:#000">11896</div>
<div class="a" style="left:38px;top:521px;width:25px;height:20px;background:#e4e7ec;border-bottom:1px solid #b3bac3"></div>
<div class="a t" style="left:38px;top:524px;width:25px;text-align:center;font-size:13px;color:#27415f">16</div>
<div class="a" style="left:64px;top:520px;width:757px;height:21px;background:#dce6f1;border-top:1px solid #000"></div>
<div class="a" style="left:64px;top:521px;width:160px;height:20px;background:#92d050"></div>
<div class="a t" style="left:67px;top:524px;font-size:13px;color:#000">Картофель</div>
<div class="a t" style="left:224px;top:524px;width:161px;text-align:center;font-size:13px;color:#000">03.05.2016</div>
<div class="a t" style="left:385px;top:524px;width:161px;text-align:center;font-size:13px;color:#000">264</div>
<div class="a t" style="left:546px;top:524px;width:161px;text-align:center;font-size:13px;color:#000">45</div>
<div class="a t" style="left:707px;top:524px;width:146px;text-align:center;font-size:13px;color:#000">11896</div>
<div class="a" style="left:38px;top:541px;width:25px;height:20px;background:#e4e7ec;border-bottom:1px solid #b3bac3"></div>
<div class="a t" style="left:38px;top:544px;width:25px;text-align:center;font-size:13px;color:#27415f">17</div>
<div class="a" style="left:64px;top:540px;width:757px;height:21px;background:#ffffff;border-top:1px solid #000"></div>
<div class="a" style="left:64px;top:541px;width:160px;height:20px;background:#92d050"></div>
<div class="a t" style="left:67px;top:544px;font-size:13px;color:#000">Картофель</div>
<div class="a t" style="left:224px;top:544px;width:161px;text-align:center;font-size:13px;color:#000">03.05.2016</div>
<div class="a t" style="left:385px;top:544px;width:161px;text-align:center;font-size:13px;color:#000">264</div>
<div class="a t" style="left:546px;top:544px;width:161px;text-align:center;font-size:13px;color:#000">45</div>
<div class="a t" style="left:707px;top:544px;width:146px;text-align:center;font-size:13px;color:#000">11896</div>
<div class="a" style="left:38px;top:561px;width:25px;height:20px;background:#e4e7ec;border-bottom:1px solid #b3bac3"></div>
<div class="a t" style="left:38px;top:564px;width:25px;text-align:center;font-size:13px;color:#27415f">18</div>
<div class="a" style="left:64px;top:560px;width:757px;height:21px;background:#dce6f1;border-top:1px solid #000"></div>
<div class="a" style="left:64px;top:561px;width:160px;height:20px;background:#92d050"></div>
<div class="a t" style="left:67px;top:564px;font-size:13px;color:#000">Картофель</div>
<div class="a t" style="left:224px;top:564px;width:161px;text-align:center;font-size:13px;color:#000">03.05.2016</div>
<div class="a t" style="left:385px;top:564px;width:161px;text-align:center;font-size:13px;color:#000">264</div>
<div class="a t" style="left:546px;top:564px;width:161px;text-align:center;font-size:13px;color:#000">45</div>
<div class="a t" style="left:707px;top:564px;width:146px;text-align:center;font-size:13px;color:#000">11896</div>
<div class="a" style="left:38px;top:581px;width:25px;height:20px;background:#e4e7ec;border-bottom:1px solid #b3bac3"></div>
<div class="a t" style="left:38px;top:584px;width:25px;text-align:center;font-size:13px;color:#27415f">19</div>
<div class="a" style="left:64px;top:580px;width:757px;height:21px;background:#ffffff;border-top:1px solid #000"></div>
<div class="a" style="left:64px;top:581px;width:160px;height:20px;background:#92d050"></div>
<div class="a t" style="left:67px;top:584px;font-size:13px;color:#000">Картофель</div>
<div class="a t" style="left:224px;top:584px;width:161px;text-align:center;font-size:13px;color:#000">03.05.2016</div>
<div class="a t" style="left:385px;top:584px;width:161px;text-align:center;font-size:13px;color:#000">343</div>
<div class="a t" style="left:546px;top:584px;width:161px;text-align:center;font-size:13px;color:#000">45</div>
<div class="a t" style="left:707px;top:584px;width:146px;text-align:center;font-size:13px;color:#000">15456</div>
<div class="a" style="left:38px;top:601px;width:25px;height:20px;background:#e4e7ec;border-bottom:1px solid #b3bac3"></div>
<div class="a t" style="left:38px;top:604px;width:25px;text-align:center;font-size:13px;color:#27415f">20</div>
<div class="a" style="left:64px;top:600px;width:757px;height:21px;background:#dce6f1;border-top:1px solid #000"></div>
<div class="a" style="left:64px;top:601px;width:160px;height:20px;background:#92d050"></div>
<div class="a t" style="left:67px;top:604px;font-size:13px;color:#000">Картофель</div>
<div class="a t" style="left:224px;top:604px;width:161px;text-align:center;font-size:13px;color:#000">03.05.2016</div>
<div class="a t" style="left:385px;top:604px;width:161px;text-align:center;font-size:13px;color:#000">343</div>
<div class="a t" style="left:546px;top:604px;width:161px;text-align:center;font-size:13px;color:#000">45</div>
<div class="a t" style="left:707px;top:604px;width:146px;text-align:center;font-size:13px;color:#000">15456</div>
<div class="a" style="left:38px;top:621px;width:25px;height:20px;background:#e4e7ec;border-bottom:1px solid #b3bac3"></div>
<div class="a t" style="left:38px;top:624px;width:25px;text-align:center;font-size:13px;color:#27415f">21</div>
<div class="a" style="left:64px;top:620px;width:757px;height:21px;background:#ffffff;border-top:1px solid #000"></div>
<div class="a" style="left:64px;top:621px;width:160px;height:20px;background:#92d050"></div>
<div class="a t" style="left:67px;top:624px;font-size:13px;color:#000">Картофель</div>
<div class="a t" style="left:224px;top:624px;width:161px;text-align:center;font-size:13px;color:#000">03.05.2016</div>
<div class="a t" style="left:385px;top:624px;width:161px;text-align:center;font-size:13px;color:#000">343</div>
<div class="a t" style="left:546px;top:624px;width:161px;text-align:center;font-size:13px;color:#000">45</div>
<div class="a t" style="left:707px;top:624px;width:146px;text-align:center;font-size:13px;color:#000">15456</div>
<div class="a" style="left:38px;top:641px;width:25px;height:20px;background:#e4e7ec;border-bottom:1px solid #b3bac3"></div>
<div class="a t" style="left:38px;top:644px;width:25px;text-align:center;font-size:13px;color:#27415f">22</div>
<div class="a" style="left:64px;top:640px;width:757px;height:21px;background:#dce6f1;border-top:1px solid #000"></div>
<div class="a" style="left:64px;top:641px;width:160px;height:20px;background:#92d050"></div>
<div class="a t" style="left:67px;top:644px;font-size:13px;color:#000">Картофель</div>
<div class="a t" style="left:224px;top:644px;width:161px;text-align:center;font-size:13px;color:#000">03.05.2016</div>
<div class="a t" style="left:385px;top:644px;width:161px;text-align:center;font-size:13px;color:#000">343</div>
<div class="a t" style="left:546px;top:644px;width:161px;text-align:center;font-size:13px;color:#000">45</div>
<div class="a t" style="left:707px;top:644px;width:146px;text-align:center;font-size:13px;color:#000">15456</div>
<div class="a" style="left:38px;top:661px;width:25px;height:20px;background:#e4e7ec;border-bottom:1px solid #b3bac3"></div>
<div class="a t" style="left:38px;top:664px;width:25px;text-align:center;font-size:13px;color:#27415f">23</div>
<div class="a" style="left:64px;top:660px;width:757px;height:21px;background:#ffffff;border-top:1px solid #000"></div>
<div class="a" style="left:64px;top:661px;width:160px;height:20px;background:#92d050"></div>
<div class="a t" style="left:67px;top:664px;font-size:13px;color:#000">Картофель</div>
<div class="a t" style="left:224px;top:664px;width:161px;text-align:center;font-size:13px;color:#000">03.05.2016</div>
<div class="a t" style="left:385px;top:664px;width:161px;text-align:center;font-size:13px;color:#000">343</div>
<div class="a t" style="left:546px;top:664px;width:161px;text-align:center;font-size:13px;color:#000">45</div>
<div class="a t" style="left:707px;top:664px;width:146px;text-align:center;font-size:13px;color:#000">15456</div>
<div class="a" style="left:38px;top:681px;width:25px;height:20px;background:#e4e7ec;border-bottom:1px solid #b3bac3"></div>
<div class="a t" style="left:38px;top:684px;width:25px;text-align:center;font-size:13px;color:#27415f">24</div>
<div class="a" style="left:64px;top:680px;width:757px;height:21px;background:#dce6f1;border-top:1px solid #000"></div>
<div class="a" style="left:64px;top:681px;width:160px;height:20px;background:#92d050"></div>
<div class="a t" style="left:67px;top:684px;font-size:13px;color:#000">Картофель</div>
<div class="a t" style="left:224px;top:684px;width:161px;text-align:center;font-size:13px;color:#000">03.05.2016</div>
<div class="a t" style="left:385px;top:684px;width:161px;text-align:center;font-size:13px;color:#000">343</div>
<div class="a t" style="left:546px;top:684px;width:161px;text-align:center;font-size:13px;color:#000">45</div>
<div class="a t" style="left:707px;top:684px;width:146px;text-align:center;font-size:13px;color:#000">15456</div>
<div class="a" style="left:38px;top:701px;width:25px;height:20px;background:#e4e7ec;border-bottom:1px solid #b3bac3"></div>
<div class="a t" style="left:38px;top:704px;width:25px;text-align:center;font-size:13px;color:#27415f">25</div>
<div class="a" style="left:64px;top:700px;width:757px;height:21px;background:#ffffff;border-top:1px solid #000"></div>
<div class="a" style="left:64px;top:701px;width:160px;height:20px;background:#92d050"></div>
<div class="a t" style="left:67px;top:704px;font-size:13px;color:#000">Картофель</div>
<div class="a t" style="left:224px;top:704px;width:161px;text-align:center;font-size:13px;color:#000">03.05.2016</div>
<div class="a t" style="left:385px;top:704px;width:161px;text-align:center;font-size:13px;color:#000">343</div>
<div class="a t" style="left:546px;top:704px;width:161px;text-align:center;font-size:13px;color:#000">45</div>
<div class="a t" style="left:707px;top:704px;width:146px;text-align:center;font-size:13px;color:#000">15456</div>
<div class="a" style="left:224px;top:221px;width:1px;height:500px;background:#000"></div>
<div class="a" style="left:385px;top:221px;width:1px;height:500px;background:#000"></div>
<div class="a" style="left:546px;top:221px;width:1px;height:500px;background:#000"></div>
<div class="a" style="left:707px;top:221px;width:1px;height:500px;background:#000"></div>
<div class="a" style="left:64px;top:720px;width:757px;height:1px;background:#000"></div>
<div class="a" style="left:207px;top:222px;width:17px;height:17px;border:1px solid #8f98a3;background:linear-gradient(#e8ebef,#dde1e6)"></div>
<svg class="a" style="left:211px;top:229px" width="9" height="5"><path d="M0 0h9L4.5 5z" fill="#4b525b"/></svg>
<div class="a" style="left:368px;top:222px;width:17px;height:17px;border:1px solid #8f98a3;background:linear-gradient(#ffffff,#eef1f4)"></div>
<svg class="a" style="left:372px;top:229px" width="9" height="5"><path d="M0 0h9L4.5 5z" fill="#4b525b"/></svg>
<div class="a" style="left:529px;top:222px;width:17px;height:17px;border:1px solid #8f98a3;background:linear-gradient(#ffffff,#eef1f4)"></div>
<svg class="a" style="left:533px;top:229px" width="9" height="5"><path d="M0 0h9L4.5 5z" fill="#4b525b"/></svg>
<div class="a" style="left:690px;top:222px;width:17px;height:17px;border:1px solid #8f98a3;background:linear-gradient(#ffffff,#eef1f4)"></div>
<svg class="a" style="left:694px;top:229px" width="9" height="5"><path d="M0 0h9L4.5 5z" fill="#4b525b"/></svg>


<!-- partial row 26 -->
<div class="a" style="left:38px;top:721px;width:25px;height:3px;background:#e4e7ec"></div>
<div class="a" style="left:64px;top:721px;width:160px;height:3px;background:#92d050"></div>
<div class="a" style="left:225px;top:721px;width:596px;height:3px;background:#fff"></div>
<!-- VSCROLL -->
<div class="a" style="left:821px;top:200px;width:16px;height:524px;background:linear-gradient(90deg,#dfe3e8,#e6e9ee 50%,#dfe3e8);border-left:1px solid #d0d5db"></div>
<div class="a" style="left:822px;top:202px;width:14px;height:7px;border:1px solid #8f98a3;background:#fff"></div>
<div class="a" style="left:825px;top:204px;width:8px;height:1px;background:#7a828c"></div>
<svg class="a" style="left:824px;top:213px" width="10" height="6"><path d="M0 6h10L5 0z" fill="#4b525b"/></svg>
<div class="a" style="left:822px;top:226px;width:14px;height:46px;border:1px solid #9aa2ad;border-radius:2px;background:linear-gradient(90deg,#f2f4f6,#fbfcfd 40%,#e3e6ea)"></div>
<div class="a" style="left:825px;top:245px;width:8px;height:1px;background:#8c949e"></div>
<div class="a" style="left:825px;top:248px;width:8px;height:1px;background:#8c949e"></div>
<div class="a" style="left:825px;top:251px;width:8px;height:1px;background:#8c949e"></div>
<svg class="a" style="left:824px;top:713px" width="10" height="6"><path d="M0 0h10L5 6z" fill="#4b525b"/></svg>
<!-- TAB BAR -->
<div class="a" style="left:37px;top:724px;width:800px;height:17px;background:#e1e5ea;border-top:1px solid #a9b1ba"></div>
<svg class="a" style="left:43px;top:728px" width="52" height="8" viewBox="0 0 52 8"><path d="M0 0h1.5v8H0zM7 0v8L2 4z" fill="#3a4049"/><path d="M21 0v8l-4-4z" fill="#3a4049"/><path d="M31 0v8l4-4z" fill="#3a4049"/><path d="M45 0v8l5-4zM50 0h1.5v8H50z" fill="#3a4049"/></svg>
<div class="a" style="left:100px;top:724px;width:1px;height:16px;background:#c0c6ce"></div>
<svg class="a" style="left:100px;top:724px" width="410" height="17" viewBox="0 0 410 17">
<path d="M0.5 0V16.5H135L147 0z" fill="#fff"/>
<path d="M0.5 0V16.5" stroke="#a9b1ba"/>
<path d="M135 16.5L147.5 0.5M205 16.5L217.5 0.5M270 16.5L282.5 0.5M330 16.5L342.5 0.5M365 16.5L377.5 0.5" stroke="#a3abb5" fill="none"/>
<path d="M135 16.5h4l-1.5-2zM205 16.5h4l-1.5-2zM270 16.5h4l-1.5-2zM330 16.5h4l-1.5-2z" fill="#fff"/>
<path d="M0 16.5H410" stroke="#a9b1ba"/>
</svg>
<div class="a t" style="left:110px;top:725px;font-size:12.8px;font-weight:bold;color:#26303c">Продукты питания</div>
<div class="a t" style="left:250px;top:725px;font-size:12px;color:#333c47">Таблица</div>
<div class="a t" style="left:315px;top:725px;font-size:12px;color:#333c47">Рассчет</div>
<div class="a t" style="left:381px;top:725px;font-size:12px;color:#333c47">Вывод</div>
<svg class="a" style="left:438px;top:726px" width="16" height="13" viewBox="0 0 16 13"><rect x="3.5" y="3.5" width="12" height="9" fill="#e8f0fb" stroke="#4a6ea8"/><path d="M3 2l1.5 1.5M1 4h2.5M4.5 0v2.5" stroke="#e8a020" stroke-width="1.3"/><circle cx="4" cy="4" r="1.6" fill="#f5c040"/></svg>
<!-- hscroll -->
<div class="a" style="left:509px;top:725px;width:6px;height:14px;border:1px solid #8f98a3;background:#fff"></div>
<div class="a" style="left:511px;top:728px;width:1px;height:8px;background:#7a828c"></div>
<svg class="a" style="left:520px;top:728px" width="5" height="9"><path d="M5 0v9L0 4.5z" fill="#4b525b"/></svg>
<div class="a" style="left:533px;top:725px;width:197px;height:15px;border:1px solid #9aa2ad;border-radius:2px;background:linear-gradient(#f3f5f7,#fbfcfd 40%,#e1e4e8)"></div>
<div class="a" style="left:627px;top:729px;width:1px;height:8px;background:#8c949e"></div>
<div class="a" style="left:630px;top:729px;width:1px;height:8px;background:#8c949e"></div>
<div class="a" style="left:633px;top:729px;width:1px;height:8px;background:#8c949e"></div>
<div class="a" style="left:636px;top:729px;width:1px;height:8px;background:#8c949e"></div>
<svg class="a" style="left:802px;top:728px" width="5" height="9"><path d="M0 0v9l5-4.5z" fill="#4b525b"/></svg>
<div class="a" style="left:813px;top:725px;width:8px;height:14px;border:1px solid #8f98a3;background:#fff"></div>
<div class="a" style="left:816px;top:728px;width:1px;height:8px;background:#7a828c"></div>
<div class="a" style="left:821px;top:724px;width:16px;height:17px;background:#e1e5ea;border-top:1px solid #a9b1ba"></div>
<!-- STATUS BAR -->
<div class="a" style="left:37px;top:740px;width:800px;height:23px;background:linear-gradient(#eef0f3,#e2e6eb 50%,#d5dae1);border-top:1px solid #9aa3ad;border-bottom:1px solid #8d96a1"></div>
<div class="a t" style="left:46px;top:744px;font-size:12px;color:#27364a">Готово</div>
<div class="a" style="left:92px;top:742px;width:1px;height:19px;background:#b3bac3"></div>
<svg class="a" style="left:101px;top:744px" width="17" height="14" viewBox="0 0 17 14"><rect x="2.5" y="2.5" width="14" height="11" fill="#fff" stroke="#2b5aa8"/><rect x="3" y="3" width="13" height="2.5" fill="#3b78c8"/><path d="M5 8h3M9 8h5M5 10.5h3M9 10.5h5" stroke="#5a8fd6"/><circle cx="3.5" cy="3.5" r="3" fill="#f0a050" stroke="#c06a20"/></svg>
<div class="a" style="left:126px;top:742px;width:1px;height:19px;background:#b3bac3"></div>
<div class="a" style="left:581px;top:742px;width:1px;height:19px;background:#b3bac3"></div>
<div class="a" style="left:586px;top:743px;width:18px;height:17px;border:1px solid #e1b45c;border-radius:2px;background:linear-gradient(#fde89c,#fbd773)"></div>
<svg class="a" style="left:589px;top:746px" width="12" height="11" viewBox="0 0 12 11"><path d="M0.5 0.5h11v10h-11zM0.5 3.5h11M0.5 6.5h11M4 0.5v10M8 0.5v10" stroke="#3d5c8c" fill="#fff"/></svg>
<svg class="a" style="left:607px;top:745px" width="14" height="13" viewBox="0 0 14 13"><rect x="0.5" y="0.5" width="13" height="12" fill="#dfe3e8" stroke="#505864"/><rect x="3.5" y="2.5" width="7" height="8" fill="#fff" stroke="#505864"/><path d="M5 5h4M5 7h4" stroke="#8a929c"/></svg>
<svg class="a" style="left:624px;top:745px" width="14" height="13" viewBox="0 0 14 13"><rect x="0.5" y="0.5" width="13" height="12" fill="#fff" stroke="#505864"/><rect x="0.5" y="0.5" width="5" height="7" fill="#dfe3e8" stroke="#505864"/><rect x="7.5" y="0.5" width="6" height="7" fill="#dfe3e8" stroke="#505864"/></svg>
<div class="a t" style="left:651px;top:745px;font-size:11px;color:#27364a">100%</div>
<div class="a" style="left:687px;top:743px;width:16px;height:16px;border-radius:50%;border:1px solid #7e8792;background:radial-gradient(circle at 50% 35%,#fff,#e6e9ed)"></div>
<div class="a" style="left:691px;top:750px;width:8px;height:2px;background:#3c434c"></div>
<div class="a" style="left:703px;top:750px;width:99px;height:2px;border-top:1px solid #a3aab3;border-bottom:1px solid #fff"></div>
<svg class="a" style="left:746px;top:742px" width="12" height="18" viewBox="0 0 12 18"><path d="M1.5 1.5h9v10l-4.5 5-4.5-5z" fill="#f4f5f7" stroke="#7e8792"/></svg>
<div class="a" style="left:802px;top:743px;width:16px;height:16px;border-radius:50%;border:1px solid #7e8792;background:radial-gradient(circle at 50% 35%,#fff,#e6e9ed)"></div>
<div class="a" style="left:806px;top:750px;width:8px;height:2px;background:#3c434c"></div>
<div class="a" style="left:809px;top:747px;width:2px;height:8px;background:#3c434c"></div>
<svg class="a" style="left:826px;top:750px" width="10" height="10" viewBox="0 0 10 10"><path d="M8 2h1.5v1.5H8zM5 5h1.5v1.5H5zM8 5h1.5v1.5H8zM2 8h1.5v1.5H2zM5 8h1.5v1.5H5zM8 8h1.5v1.5H8z" fill="#9aa2ac"/></svg>

<!-- MENU -->
<div class="a" style="left:302px;top:243px;width:4px;height:386px;background:linear-gradient(90deg,rgba(0,0,0,.25),rgba(0,0,0,0))"></div>
<div class="a" style="left:36px;top:626px;width:268px;height:3px;background:linear-gradient(rgba(0,0,0,.22),rgba(0,0,0,0))"></div>
<div class="a" style="left:33px;top:240px;width:270px;height:387px;background:#fff;border-right:1px solid #c6cbd1;border-bottom:1px solid #b9bfc6"></div>
<div class="a" style="left:58px;top:262px;width:1px;height:353px;background:#e3e6ea"></div>
<!-- item1 highlighted -->
<div class="a" style="left:34px;top:244px;width:268px;height:18px;border-radius:2px;background:linear-gradient(#bba777 0,#c2a873 4px,#ddc58e 5px,#e6d49c 8px,#f6ebbd 9px,#fdf6d2 11px,#fff8da 17px);border-bottom:1px solid #f5d76a"></div>
<svg class="a" style="left:38px;top:244px" width="16" height="16" viewBox="0 0 16 16"><text x="1" y="7" font-size="8" font-weight="bold" fill="#1e3f8f" font-family="Liberation Serif">A</text><text x="1" y="15" font-size="8" font-weight="bold" fill="#8a3a2a" font-family="Liberation Serif">Я</text><path d="M12 0.5v14" stroke="#000" stroke-width="1.2"/><path d="M9.5 11.5L12 15l2.5-3.5" stroke="#000" stroke-width="1.2" fill="none"/></svg>
<div class="a t" style="left:67px;top:245px;font-size:11.5px;color:#1e2d3f">Сортировка от <u>А</u> до Я</div>
<!-- item2 -->
<svg class="a" style="left:38px;top:265px" width="16" height="16" viewBox="0 0 16 16"><text x="1" y="7" font-size="8" font-weight="bold" fill="#8a3a2a" font-family="Liberation Serif">Я</text><text x="1" y="15" font-size="8" font-weight="bold" fill="#1e3f8f" font-family="Liberation Serif">A</text><path d="M12 0.5v14" stroke="#000" stroke-width="1.2"/><path d="M9.5 11.5L12 15l2.5-3.5" stroke="#000" stroke-width="1.2" fill="none"/></svg>
<div class="a t" style="left:67px;top:267px;font-size:11.5px;color:#1e2d3f">Сортировка от <u>Я</u> до А</div>
<!-- item3 -->
<div class="a t" style="left:67px;top:289px;font-size:11.5px;color:#1e2d3f"><u>С</u>ортировка по цвету</div>
<svg class="a" style="left:289px;top:291px" width="4" height="8"><path d="M0 0v8l4-4z" fill="#6b7380"/></svg>
<div class="a" style="left:67px;top:307px;width:230px;height:1px;border-top:1px dashed #c5cad0"></div>
<!-- item4 disabled -->
<svg class="a" style="left:39px;top:314px" width="15" height="14" viewBox="0 0 15 14"><path d="M0.5 0.5h11l-4 5v7l-3-2v-5z" fill="#e6e8eb" stroke="#8e959e"/><path d="M8 6l6 6M14 6l-6 6" stroke="#8e959e" stroke-width="1.5"/></svg>
<div class="a t" style="left:67px;top:315px;font-size:11.5px;color:#a7adb5"><u>У</u>далить фильтр с "Наименование"</div>
<div class="a t" style="left:67px;top:337px;font-size:11.5px;color:#a7adb5"><u>Ф</u>ильтр по цвету</div>
<svg class="a" style="left:289px;top:339px" width="4" height="8"><path d="M0 0v8l4-4z" fill="#b5bbc3"/></svg>
<div class="a t" style="left:67px;top:359px;font-size:11.5px;color:#1e2d3f">Текстовые <u>ф</u>ильтры</div>
<svg class="a" style="left:289px;top:361px" width="4" height="8"><path d="M0 0v8l4-4z" fill="#6b7380"/></svg>
<div class="a" style="left:66px;top:376px;width:231px;height:1px;background:#e0e4e9"></div>
<!-- search -->
<div class="a" style="left:66px;top:382px;width:230px;height:21px;border:1px solid #a4abb4;background:#fff"></div>
<div class="a t" style="left:69px;top:385px;font-size:12px;color:#8a929c">Поиск</div>
<svg class="a" style="left:280px;top:385px" width="13" height="13" viewBox="0 0 13 13"><circle cx="8" cy="5" r="3.6" fill="none" stroke="#2d6cc6" stroke-width="1.8"/><path d="M5.5 7.5L1 12" stroke="#1f4f9c" stroke-width="2.2"/></svg>
<!-- list -->
<div class="a" style="left:66px;top:406px;width:230px;height:168px;border:1px solid #d0d8e2;background:#fff"></div>
<div class="a" style="left:79px;top:415px;width:1px;height:81px;border-left:1px dotted #6a6a6a"></div>
<div class="a" style="left:80px;top:415px;width:9px;height:1px;border-top:1px dotted #6a6a6a"></div>
<div class="a" style="left:89px;top:410px;width:11px;height:11px;border:1px solid #5a6470;background:#fff"></div>
<svg class="a" style="left:90px;top:411px" width="9" height="9" viewBox="0 0 9 9"><path d="M1.2 4.2L3.5 6.8 8 1.5" stroke="#111" stroke-width="1.8" fill="none"/></svg>
<div class="a t" style="left:102px;top:409px;font-size:11.3px;color:#1e2d3f">(Выделить все)</div>
<div class="a" style="left:80px;top:431px;width:9px;height:1px;border-top:1px dotted #6a6a6a"></div>
<div class="a" style="left:89px;top:426px;width:11px;height:11px;border:1px solid #5a6470;background:#fff"></div>
<svg class="a" style="left:90px;top:427px" width="9" height="9" viewBox="0 0 9 9"><path d="M1.2 4.2L3.5 6.8 8 1.5" stroke="#111" stroke-width="1.8" fill="none"/></svg>
<div class="a t" style="left:102px;top:425px;font-size:11.3px;color:#1e2d3f">Картофель</div>
<div class="a" style="left:80px;top:447px;width:9px;height:1px;border-top:1px dotted #6a6a6a"></div>
<div class="a" style="left:89px;top:442px;width:11px;height:11px;border:1px solid #5a6470;background:#fff"></div>
<svg class="a" style="left:90px;top:443px" width="9" height="9" viewBox="0 0 9 9"><path d="M1.2 4.2L3.5 6.8 8 1.5" stroke="#111" stroke-width="1.8" fill="none"/></svg>
<div class="a t" style="left:102px;top:441px;font-size:11.3px;color:#1e2d3f">Мясо</div>
<div class="a" style="left:80px;top:463px;width:9px;height:1px;border-top:1px dotted #6a6a6a"></div>
<div class="a" style="left:89px;top:458px;width:11px;height:11px;border:1px solid #5a6470;background:#fff"></div>
<svg class="a" style="left:90px;top:459px" width="9" height="9" viewBox="0 0 9 9"><path d="M1.2 4.2L3.5 6.8 8 1.5" stroke="#111" stroke-width="1.8" fill="none"/></svg>
<div class="a t" style="left:102px;top:457px;font-size:11.3px;color:#1e2d3f">Рыба</div>
<div class="a" style="left:80px;top:479px;width:9px;height:1px;border-top:1px dotted #6a6a6a"></div>
<div class="a" style="left:89px;top:474px;width:11px;height:11px;border:1px solid #5a6470;background:#fff"></div>
<svg class="a" style="left:90px;top:475px" width="9" height="9" viewBox="0 0 9 9"><path d="M1.2 4.2L3.5 6.8 8 1.5" stroke="#111" stroke-width="1.8" fill="none"/></svg>
<div class="a t" style="left:102px;top:473px;font-size:11.3px;color:#1e2d3f">Сахар</div>
<div class="a" style="left:80px;top:495px;width:9px;height:1px;border-top:1px dotted #6a6a6a"></div>
<div class="a" style="left:89px;top:490px;width:11px;height:11px;border:1px solid #5a6470;background:#fff"></div>
<svg class="a" style="left:90px;top:491px" width="9" height="9" viewBox="0 0 9 9"><path d="M1.2 4.2L3.5 6.8 8 1.5" stroke="#111" stroke-width="1.8" fill="none"/></svg>
<div class="a t" style="left:102px;top:489px;font-size:11.3px;color:#1e2d3f">Чай</div>

<!-- buttons -->
<div class="a" style="left:138px;top:590px;width:74px;height:21px;border:1px solid #707780;border-radius:3px;background:linear-gradient(#f4f5f6,#eceef0 45%,#dcdfe3 50%,#d3d7dc)"></div>
<div class="a t" style="left:138px;top:594px;width:74px;text-align:center;font-size:11.5px;color:#1e2d3f">OK</div>
<div class="a" style="left:222px;top:590px;width:73px;height:21px;border:1px solid #707780;border-radius:3px;background:linear-gradient(#f4f5f6,#eceef0 45%,#dcdfe3 50%,#d3d7dc)"></div>
<div class="a t" style="left:222px;top:594px;width:73px;text-align:center;font-size:11.5px;color:#1e2d3f">Отмена</div>
<div class="a" style="left:34px;top:616px;width:268px;height:10px;background:linear-gradient(#f1f3f5,#e4e7eb);border-top:1px solid #dde3ea"></div>
<svg class="a" style="left:292px;top:618px" width="8" height="8" viewBox="0 0 8 8"><path d="M6 0h1.5v1.5H6zM3 3h1.5v1.5H3zM6 3h1.5v1.5H6zM0 6h1.5v1.5H0zM3 6h1.5v1.5H3zM6 6h1.5v1.5H6z" fill="#a9b0b8"/></svg>
<!-- RED OUTLINE -->
<div class="a" style="left:28px;top:239px;width:279px;height:46px;border:5px solid #ff0000;border-radius:12px;box-shadow:0 4px 4px -1px rgba(60,66,72,.45)"></div>



</body></html>
